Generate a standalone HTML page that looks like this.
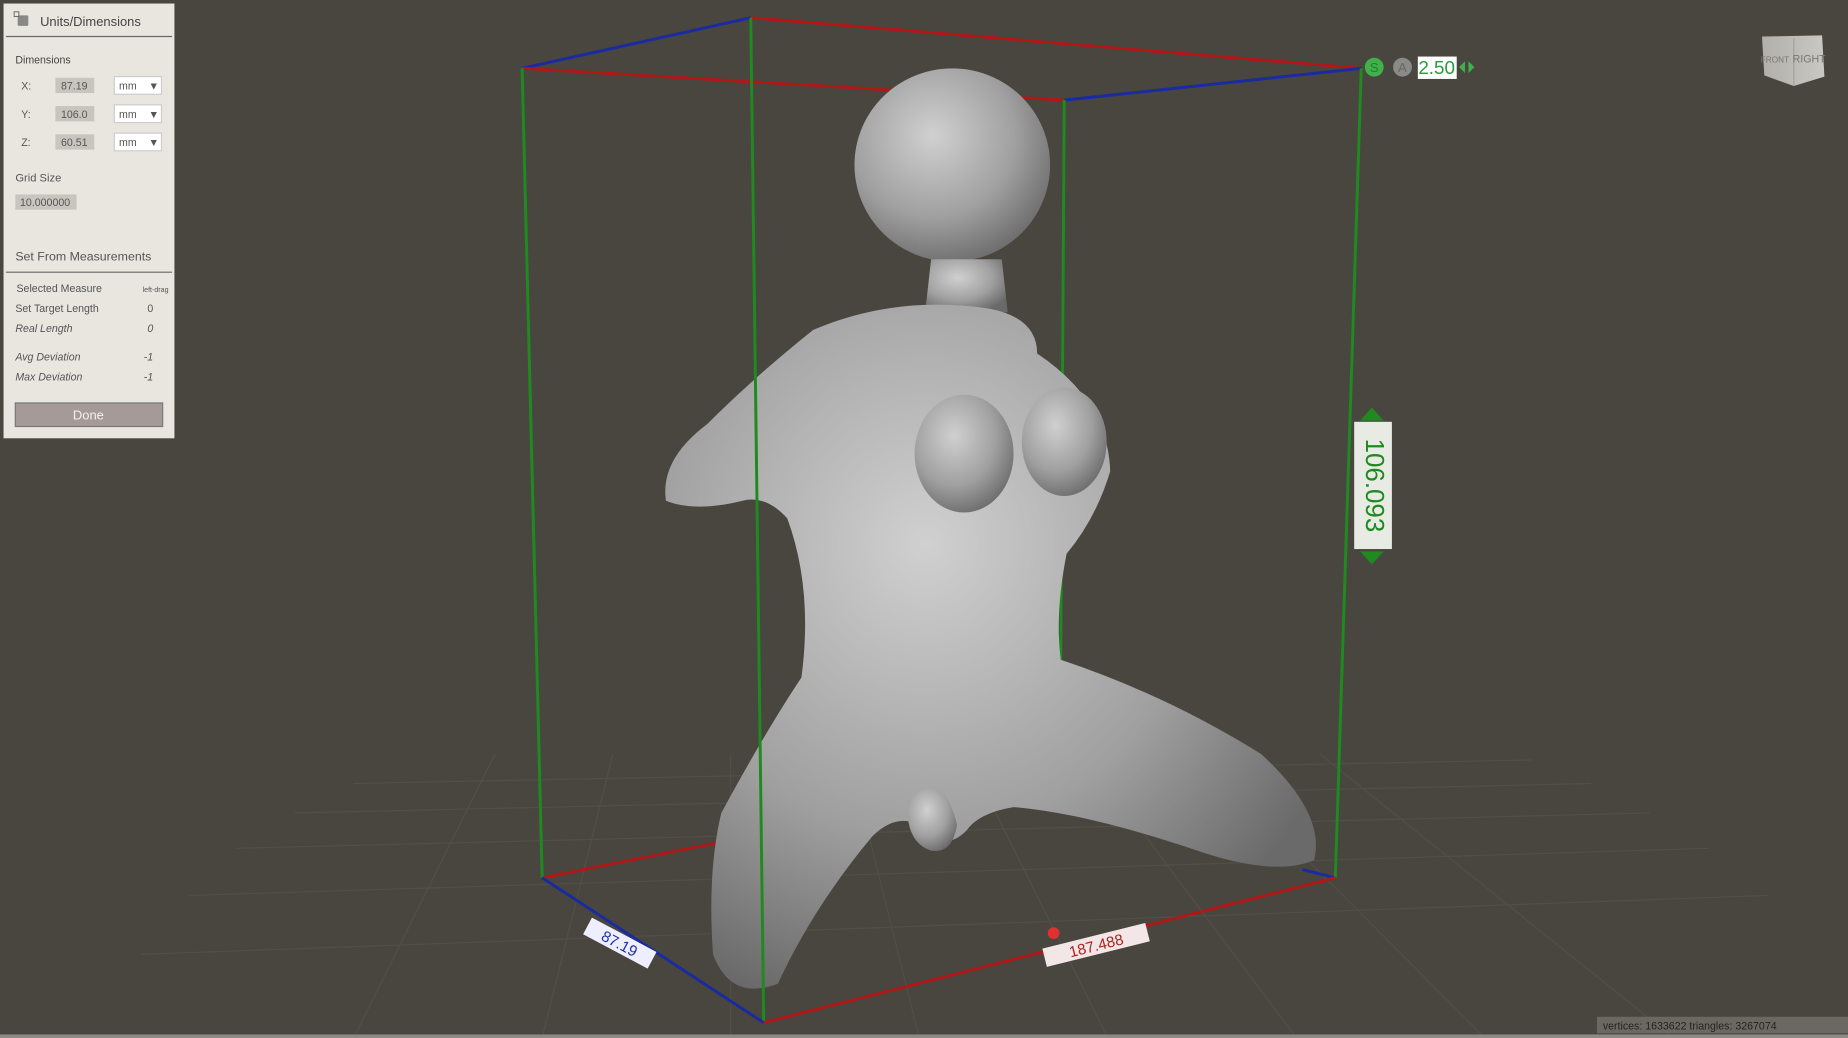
<!DOCTYPE html>
<html><head><meta charset="utf-8"><style>
html,body{margin:0;padding:0;background:#48463f;overflow:hidden}
svg{display:block}
text{font-family:"Liberation Sans",sans-serif}
</style></head><body>
<svg width="1848" height="1038" viewBox="0 0 1568 881" preserveAspectRatio="none" xmlns="http://www.w3.org/2000/svg">
<defs>
<radialGradient id="g" cx="40%" cy="35%" r="70%"><stop offset="0" stop-color="#d0d0d0"/><stop offset="0.6" stop-color="#a0a0a0"/><stop offset="1" stop-color="#6a6a6a"/></radialGradient>
<linearGradient id="cube" x1="0" x2="1"><stop offset="0" stop-color="#b0afa9"/><stop offset="1" stop-color="#c9c8c3"/></linearGradient>
</defs>
<rect width="1568" height="881" fill="#48463f"/>
<!-- grid -->
<g stroke="#55534b" stroke-width="1" fill="none" opacity="0.7">
<path d="M200 720 L1400 690 M160 760 L1450 720 M120 810 L1500 760 M250 690 L1350 665 M300 665 L1300 645"/>
<path d="M420 640 L300 881 M520 640 L460 881 M620 640 L620 881 M720 640 L780 881 M820 640 L940 881 M920 640 L1100 881 M1020 640 L1260 881 M1120 640 L1420 881"/>
</g>
<!-- back box lines -->
<g stroke-width="2.5" fill="none">
<line x1="443" y1="58" x2="637" y2="15" stroke="#1a2aa0"/>
<line x1="637" y1="15" x2="1155" y2="58" stroke="#b01818"/>
<line x1="443" y1="58" x2="903" y2="85" stroke="#b01818"/>
<line x1="903" y1="85" x2="1155" y2="58" stroke="#1a2aa0"/>
<line x1="460" y1="745" x2="610" y2="715" stroke="#b01818"/>
<line x1="1105" y1="738" x2="1133" y2="745" stroke="#1a2aa0"/>
<line x1="443" y1="58" x2="460" y2="745" stroke="#1f8a1f"/>
<line x1="903" y1="85" x2="900" y2="560" stroke="#1f8a1f"/>
<line x1="1155" y1="58" x2="1133" y2="745" stroke="#1f8a1f"/>
</g>
<!-- abstract figure -->
<g fill="url(#g)">
<ellipse cx="808" cy="140" rx="83" ry="82"/>
<path d="M790 220 L850 220 L855 265 L785 265 Z"/>
<path d="M690 280 Q760 250 840 262 Q880 270 880 300 Q940 340 942 400 Q930 440 905 470 Q895 520 900 560 Q990 590 1070 640 Q1125 690 1115 730 Q1080 745 1010 720 Q920 690 860 685 Q830 690 820 705 Q800 725 780 700 Q760 690 740 710 Q690 770 660 835 Q620 850 605 810 Q600 740 612 690 Q650 620 680 575 Q690 500 668 440 Q650 420 630 425 Q590 435 565 425 Q560 390 600 360 Q640 320 690 280 Z"/>
<ellipse cx="818" cy="385" rx="42" ry="50"/>
<ellipse cx="903" cy="375" rx="36" ry="46"/>
<path d="M770 680 Q800 650 812 700 Q808 725 790 722 Q768 715 770 680 Z"/>
</g>
<!-- front box lines -->
<g stroke-width="2.5" fill="none">
<line x1="637" y1="15" x2="648" y2="868" stroke="#1f8a1f"/>
<line x1="460" y1="745" x2="648" y2="868" stroke="#1a2aa0"/>
<line x1="648" y1="868" x2="1133" y2="745" stroke="#b01818"/>
</g>
<!-- labels -->
<g transform="rotate(28 525 800)"><rect x="495" y="792" width="62" height="16" fill="#eef"/><text x="526" y="805" font-size="13" fill="#2233aa" text-anchor="middle">87.19</text></g>
<g transform="rotate(-14 930 802)"><rect x="885" y="794" width="90" height="16" fill="#f3e6e6"/><text x="930" y="807" font-size="13" fill="#b02020" text-anchor="middle">187.488</text></g>
<circle cx="894" cy="792" r="5" fill="#e03030"/>
<rect x="1149" y="358" width="32" height="108" fill="#e8ebe4"/>
<text transform="translate(1159 412) rotate(90)" font-size="22" fill="#1f8a1f" text-anchor="middle">106.093</text>
<path d="M1154 357 L1164 346 L1174 357 Z M1154 468 L1164 479 L1174 468 Z" fill="#1f8a1f"/>
<!-- top right controls -->
<circle cx="1166" cy="57" r="8" fill="#3fb04a"/><text x="1166" y="61" font-size="11" fill="#2a7a30" text-anchor="middle">S</text>
<circle cx="1190" cy="57" r="8" fill="#8a8a86"/><text x="1190" y="61" font-size="11" fill="#666" text-anchor="middle">A</text>
<rect x="1203" y="48" width="33" height="19" fill="#fff"/><text x="1219" y="63" font-size="16" fill="#2a9a3a" text-anchor="middle">2.50</text>
<path d="M1238 57 L1243 52 L1243 62 Z M1246 52 L1251 57 L1246 62 Z" fill="#3fb04a"/>
<!-- view cube -->
<path d="M1495 31 L1546 30 L1548 65 L1522 73 L1497 64 Z" fill="url(#cube)"/>
<line x1="1522" y1="32" x2="1522" y2="73" stroke="#a4a39e"/>
<text x="1506" y="53" font-size="7" fill="#777" text-anchor="middle">FRONT</text>
<text x="1535" y="53" font-size="9" fill="#777" text-anchor="middle">RIGHT</text>
<!-- status -->
<rect x="1355" y="863" width="213" height="14" fill="#6a6961"/>
<text x="1360" y="874" font-size="9" fill="#222">vertices: 1633622 triangles: 3267074</text>
<rect x="0" y="878" width="1568" height="3" fill="#8b8a85"/>
<!-- panel -->
<rect x="3" y="3" width="145" height="369" fill="#e9e6e0"/>
<rect x="15" y="13" width="9" height="9" fill="#888" rx="1"/><rect x="12" y="10" width="4" height="4" fill="none" stroke="#666" stroke-width="0.8"/>
<text x="34" y="22" font-size="11" fill="#444">Units/Dimensions</text>
<line x1="5" y1="31" x2="146" y2="31" stroke="#666"/>
<text x="13" y="54" font-size="9" fill="#444">Dimensions</text>
<g font-size="9" fill="#555">
<text x="18" y="76">X:</text><text x="18" y="100">Y:</text><text x="18" y="124">Z:</text>
<rect x="47" y="66" width="33" height="13" fill="#c8c5bf"/><text x="63" y="76" text-anchor="middle">87.19</text>
<rect x="47" y="90" width="33" height="13" fill="#c8c5bf"/><text x="63" y="100" text-anchor="middle">106.0</text>
<rect x="47" y="114" width="33" height="13" fill="#c8c5bf"/><text x="63" y="124" text-anchor="middle">60.51</text>
<rect x="97" y="65" width="40" height="15" fill="#fff" stroke="#ccc"/><text x="101" y="76">mm</text><text x="126" y="76">▼</text>
<rect x="97" y="89" width="40" height="15" fill="#fff" stroke="#ccc"/><text x="101" y="100">mm</text><text x="126" y="100">▼</text>
<rect x="97" y="113" width="40" height="15" fill="#fff" stroke="#ccc"/><text x="101" y="124">mm</text><text x="126" y="124">▼</text>
<text x="13" y="154" font-size="9.5">Grid Size</text>
<rect x="13" y="165" width="52" height="13" fill="#c8c5bf"/><text x="17" y="175">10.000000</text>
<text x="13" y="221" font-size="10.5">Set From Measurements</text>
<line x1="5" y1="231" x2="146" y2="231" stroke="#666"/>
<text x="14" y="248">Selected Measure</text><text x="121" y="248" font-size="6">left-drag</text>
<text x="13" y="265">Set Target Length</text><text x="125" y="265">0</text>
<g font-style="italic"><text x="13" y="282">Real Length</text><text x="125" y="282">0</text>
<text x="13" y="306">Avg Deviation</text><text x="122" y="306">-1</text>
<text x="13" y="323">Max Deviation</text><text x="122" y="323">-1</text></g>
</g>
<rect x="13" y="342" width="125" height="20" fill="#a59a98" stroke="#777"/>
<text x="75" y="356" font-size="11" fill="#f3f0ee" text-anchor="middle">Done</text>
</svg>
</body></html>
